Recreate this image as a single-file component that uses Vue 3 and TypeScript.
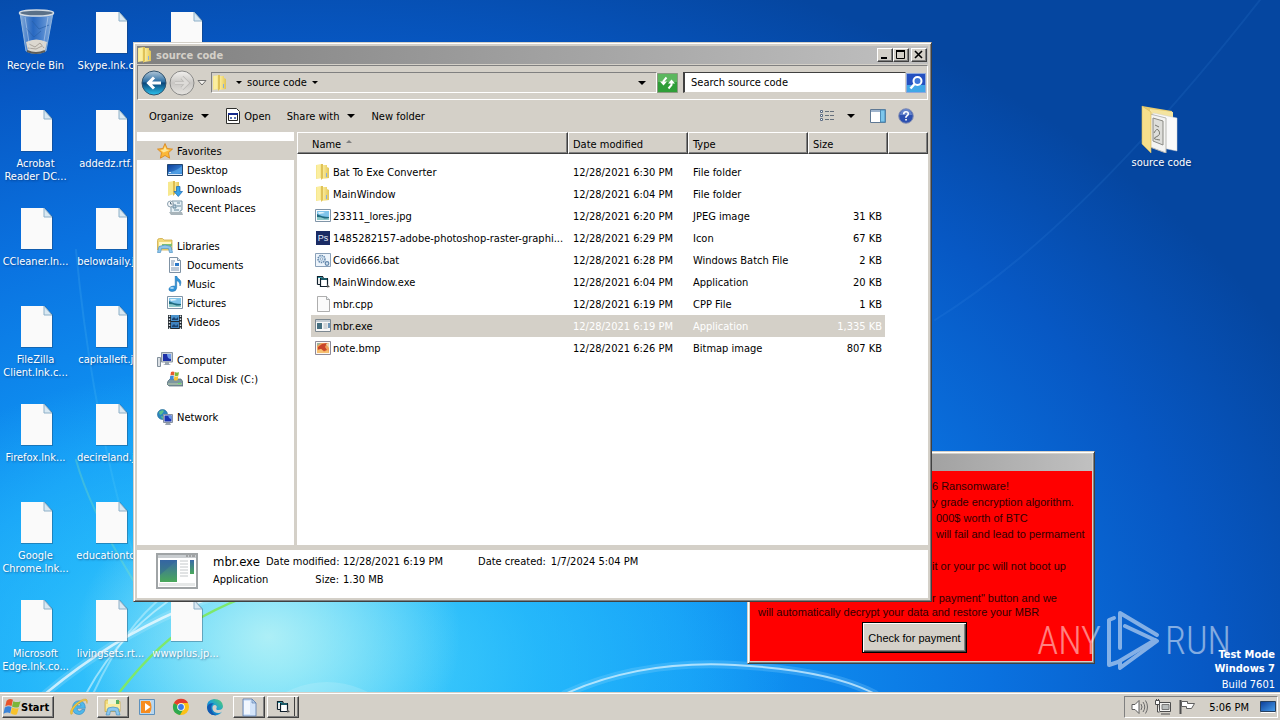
<script setup lang="ts">
import { ref } from 'vue'

interface DesktopItem { icon: string; lines: string[] }
interface NavItem { icon: string; label: string }
interface NavGroup { icon: string; label: string; active?: boolean; children: NavItem[] }
interface FileRow { icon: string; name: string; date: string; type: string; size: string }

const desktopColumns: (DesktopItem | null)[][] = [
  [
    { icon: 'recycle', lines: ['Recycle Bin'] },
    { icon: 'page', lines: ['Acrobat', 'Reader DC...'] },
    { icon: 'page', lines: ['CCleaner.ln...'] },
    { icon: 'page', lines: ['FileZilla', 'Client.lnk.c...'] },
    { icon: 'page', lines: ['Firefox.lnk...'] },
    { icon: 'page', lines: ['Google', 'Chrome.lnk...'] },
    { icon: 'page', lines: ['Microsoft', 'Edge.lnk.co...'] },
  ],
  [
    { icon: 'page', lines: ['Skype.lnk.c...'] },
    { icon: 'page', lines: ['addedz.rtf....'] },
    { icon: 'page', lines: ['belowdaily.j...'] },
    { icon: 'page', lines: ['capitalleft.j...'] },
    { icon: 'page', lines: ['decireland.j...'] },
    { icon: 'page', lines: ['educationto...'] },
    { icon: 'page', lines: ['livingsets.rt...'] },
  ],
  [
    { icon: 'page', lines: [] },
    null, null, null, null, null,
    { icon: 'page', lines: ['wwwplus.jp...'] },
  ],
]

const nav: NavGroup[] = [
  {
    icon: 'star', label: 'Favorites', active: true, children: [
      { icon: 'desktop', label: 'Desktop' },
      { icon: 'downloads', label: 'Downloads' },
      { icon: 'recent', label: 'Recent Places' },
    ],
  },
  {
    icon: 'libraries', label: 'Libraries', children: [
      { icon: 'document', label: 'Documents' },
      { icon: 'music', label: 'Music' },
      { icon: 'picture', label: 'Pictures' },
      { icon: 'video', label: 'Videos' },
    ],
  },
  { icon: 'computer', label: 'Computer', children: [{ icon: 'disk', label: 'Local Disk (C:)' }] },
  { icon: 'network', label: 'Network', children: [] },
]

const files: FileRow[] = [
  { icon: 'folder', name: 'Bat To Exe Converter', date: '12/28/2021 6:30 PM', type: 'File folder', size: '' },
  { icon: 'folder', name: 'MainWindow', date: '12/28/2021 6:04 PM', type: 'File folder', size: '' },
  { icon: 'picture', name: '23311_lores.jpg', date: '12/28/2021 6:20 PM', type: 'JPEG image', size: '31 KB' },
  { icon: 'ps', name: '1485282157-adobe-photoshop-raster-graphi...', date: '12/28/2021 6:29 PM', type: 'Icon', size: '67 KB' },
  { icon: 'batch', name: 'Covid666.bat', date: '12/28/2021 6:28 PM', type: 'Windows Batch File', size: '2 KB' },
  { icon: 'vb', name: 'MainWindow.exe', date: '12/28/2021 6:04 PM', type: 'Application', size: '20 KB' },
  { icon: 'blank', name: 'mbr.cpp', date: '12/28/2021 6:19 PM', type: 'CPP File', size: '1 KB' },
  { icon: 'exe', name: 'mbr.exe', date: '12/28/2021 6:19 PM', type: 'Application', size: '1,335 KB' },
  { icon: 'bitmap', name: 'note.bmp', date: '12/28/2021 6:26 PM', type: 'Bitmap image', size: '807 KB' },
]

const selected = ref('mbr.exe')
const search = ref('')
</script>

<template>
  <svg class="sprites" aria-hidden="true">
    <defs>
      <linearGradient id="g-folder" x1="0" x2="1"><stop offset="0" stop-color="#fbf0a8" /><stop offset=".5" stop-color="#f2dc7c" /><stop offset="1" stop-color="#e0c458" /></linearGradient>
      <linearGradient id="g-glass" x1="0" x2="1"><stop offset="0" stop-color="#b8d0e8" stop-opacity=".75" /><stop offset=".4" stop-color="#4a80cc" stop-opacity=".5" /><stop offset="1" stop-color="#a8c8ec" stop-opacity=".8" /></linearGradient>
      <linearGradient id="g-back" x1="0" y1="0" x2="0" y2="1"><stop offset="0" stop-color="#b4c8d8" /><stop offset=".45" stop-color="#2a6ea4" /><stop offset=".5" stop-color="#0a4578" /><stop offset="1" stop-color="#2cc4f0" /></linearGradient>
      <linearGradient id="g-fwd" x1="0" y1="0" x2="0" y2="1"><stop offset="0" stop-color="#f2f0ee" /><stop offset=".5" stop-color="#c9c7c4" /><stop offset="1" stop-color="#e6e4e0" /></linearGradient>
      <linearGradient id="g-screen" x1="0" y1="0" x2="1" y2="1"><stop offset="0" stop-color="#0a3c98" /><stop offset="1" stop-color="#4aa0ec" /></linearGradient>
      <linearGradient id="g-exe" x1="0" y1="0" x2="0" y2="1"><stop offset="0" stop-color="#3a6aa8" /><stop offset="1" stop-color="#4aa85a" /></linearGradient>
      <linearGradient id="g-edge" x1="0" y1="1" x2="1" y2="0"><stop offset="0" stop-color="#0c58b0" /><stop offset=".5" stop-color="#1aa0d8" /><stop offset="1" stop-color="#58d068" /></linearGradient>
    </defs>

    <symbol id="i-page" viewBox="0 0 48 48">
      <path d="M9 4h24l8 9v33H9z" fill="#1c3550" opacity=".35" />
      <path d="M9 4h23l8 9v32H9z" fill="#fafafa" />
      <path d="M32 4v9h8z" fill="#d9e8f2" stroke="#8eb0c8" />
    </symbol>
    <symbol id="i-recycle" viewBox="0 0 48 48">
      <path d="M8 5l6 38q10 5 20 0l7-38z" fill="url(#g-glass)" stroke="#8fb4dc" />
      <path d="M14 34q10-5 21 0l-2 9q-9 4-17 0z" fill="#dcd8d0" />
      <path d="M17 36l6 3 5-4 4 5M16 40l8 1 6-3" stroke="#aaa49c" fill="none" />
      <path d="M20 13l7 8 10-4M14 20l8 9 7-6" stroke="#2860a8" fill="none" opacity=".7" />
      <path d="M13 9l5 32M36 9l-5 30" stroke="#cfe0f4" opacity=".5" />
      <ellipse cx="24.500" cy="5" rx="17" ry="3" fill="#5a7088" stroke="#d4dce4" stroke-width="1.500" />
      <path d="M15 43q9 4 18 0" stroke="#5c5c58" fill="none" stroke-width="2" />
    </symbol>
    <symbol id="i-openfolder" viewBox="3 0 48 48">
      <path d="M7 1l30 5v38l-30-6z" fill="#e8cc70" />
      <path d="M15 4l23 3v35H15z" fill="#f4e4a0" />
      <path d="M18 8l24 5v33l-24-5z" fill="#fafafa" stroke="#d0d0d0" stroke-width=".5" />
      <path d="M15 9l16 4v35l-16-6z" fill="#f4f4f2" stroke="#b8b8b4" />
      <path d="M18 13l10 3v24l-10-4z" fill="#dededa" stroke="#8a8a84" />
      <path d="M19 28q3-6 5-2t-3 6 4 3M20 20l4 2" stroke="#77776f" fill="none" />
      <path d="M7 1l9 6v41L7 39z" fill="#f6df8c" stroke="#d8b858" stroke-width=".6" />
    </symbol>
    <symbol id="i-folder" viewBox="0 0 16 16">
      <path d="M1 1l6-1v14l-6 1z" fill="#f7e88e" /><path d="M7 1h5v2l2 1v10l-7 1z" fill="url(#g-folder)" />
      <path d="M6 0h2v14l-2 2z" fill="#dfc258" /><path d="M2 1h3v13H2z" fill="#fbeea0" /><path d="M11 9h1v4h-1z" fill="#88aede" />
    </symbol>
    <symbol id="i-star" viewBox="0 0 16 16"><path d="M8 .5l2.200 5 5.300.6-4 3.600 1.100 5.500L8 12.500l-4.600 2.700 1.100-5.500-4-3.600 5.300-.6z" fill="#fbb838" stroke="#d98318" stroke-width=".8" /><path d="M8 3l1.400 3.500 3.200.5-6 2.500-3-2.500 3-.5z" fill="#fee698" /></symbol>
    <symbol id="i-desktop" viewBox="0 0 16 16"><path d="M.5 2.500h15v11H.5z" fill="url(#g-screen)" stroke="#23466e" /><path d="M1 10q7 0 14-6v6q-6 3-14 2z" fill="#5fb0ef" opacity=".6" /><path d="M1 12h14v1H1zM2 10h2v1H2z" fill="#d8e8f8" /></symbol>
    <symbol id="i-downloads" viewBox="0 0 16 16"><path d="M1 1l6-1v13l-6 2z" fill="#f7e88e" /><path d="M7 1h5v12H7z" fill="url(#g-folder)" /><path d="M6 0h2v13l-2 2z" fill="#ddbd50" /><path d="M9.500 5.500h3.500v5h2.500L11.300 15.500 7 10.500h2.500z" fill="#38a2ea" stroke="#1768b2" stroke-width=".7" /></symbol>
    <symbol id="i-recent" viewBox="0 0 16 16"><path d="M5 1h10v9l-2 1v3H4V6z" fill="#e6f0f5" stroke="#7d99a9" /><path d="M6 5h3v3H6zM10 3h3M10 6h4M7 10h5" fill="#bcd0de" stroke="#65889c" /><circle cx="3.500" cy="4" r="3" fill="#f3f6f8" stroke="#8ba0ae" /><path d="M3.500 2v2h2" stroke="#577080" fill="none" /><path d="M2 12h13l1 3H4z" fill="#a8b4ba" /></symbol>
    <symbol id="i-libraries" viewBox="0 0 16 16"><path d="M.5 2.500q0-2 2-2h3l1.500 1.500h8v10H.5z" fill="#f1d978" stroke="#ceab49" stroke-width=".8" /><path d="M2 4h12v4H2z" fill="#fff7c6" /><path d="M5 6h9l1-1v3H5z" fill="#7fc06c" /><path d="M2 8.500q6-3 12 0l1.500 6h-3l-1-4h-7l-1 4H.5z" fill="#8ec5ec" stroke="#4c93c6" stroke-width=".7" /></symbol>
    <symbol id="i-document" viewBox="0 0 16 16"><path d="M2.500.5h8l3 3v12h-11z" fill="#fbfcfd" stroke="#7f92a4" /><path d="M4 4h4M4 6h3M4 8h3M4 11h8M4 13h8" stroke="#7d94b0" /><path d="M8 6h4v3H8z" fill="#2c78c8" /><path d="M10.500.5v3h3" fill="#d7e4ee" stroke="#7f92a4" /></symbol>
    <symbol id="i-music" viewBox="0 0 16 16"><path d="M8.200 0h1.400q.5 2 3 3.600 2.400 2 .4 6.400.3-4-3.300-5.600V12q-.5 3.500-4.500 3.600Q1.500 15.300 2 12.700q1-2.700 4.600-2.700l1.600.2z" fill="#2f93d9" stroke="#1b6cab" stroke-width=".5" /><ellipse cx="5" cy="12" rx="2" ry="1" fill="#a6d6f7" /></symbol>
    <symbol id="i-picture" viewBox="0 0 16 16"><path d="M.5 1.500h15v12H.5z" fill="#fcfdfe" stroke="#8095a8" /><path d="M2 3h12v9H2z" fill="#7fc4ea" /><path d="M2 6q5 3 12 3v3H2z" fill="#1f6b80" /><path d="M2 9q4 0 6 1t6 0v2H2z" fill="#8cc8c8" /><path d="M3 4h5l2 1-6 1z" fill="#dff2fb" /></symbol>
    <symbol id="i-video" viewBox="0 0 16 16"><path d="M1 1h14v14H1z" fill="#232a30" /><path d="M4 1h8v6H4z" fill="#4b93cc" /><path d="M4 8h8v6H4z" fill="#3f83bf" /><path d="M2.500 1.500v14M13.500 1.500v14" stroke="#dfe5ea" stroke-width="1.400" stroke-dasharray="1.500 1.500" /><path d="M5 5q2-3 3-1t3-1v3H5zM5 12q2-3 3-1t3-1v3H5z" fill="#1b4572" /></symbol>
    <symbol id="i-computer" viewBox="0 0 16 16"><path d="M.5 5.500h3v9h-3z" fill="#dadfe4" stroke="#83909c" /><path d="M4.500.5h11v9.500h-11z" fill="#c8d0d8" stroke="#8b96a1" /><path d="M6 2h8v7H6z" fill="#1d30a8" /><path d="M10 2h4v5q-4 0-4-5z" fill="#6f9bea" /><path d="M8 10h4v2l2 1H6l2-1z" fill="#9aa5b0" /></symbol>
    <symbol id="i-disk" viewBox="0 0 16 16"><path d="M1 10l2-2h11l2 3v4H2l-2-2z" fill="#7d97a0" stroke="#4d666f" stroke-width=".7" /><path d="M1 12h14v2H1z" fill="#9fb4a7" /><path d="M11 12h3v1h-3z" fill="#65e864" /><path d="M4 1q2-1 3.500 0L7 4.500q-2-1-3.600 0z" fill="#e8592c" /><path d="M8 1q2 1 4 0l-.6 3.500q-2 1-3.900 0z" fill="#7fb83a" /><path d="M3.200 5q2-1 3.600 0L6.300 9q-2-1-3.600 0z" fill="#3d8ad8" /><path d="M7.400 5q2 1 3.900 0l-.6 4q-2 1-3.800 0z" fill="#f6c330" /></symbol>
    <symbol id="i-network" viewBox="0 0 16 16"><circle cx="5.500" cy="5.500" r="5" fill="#2c86c0" stroke="#19658f" stroke-width=".6" /><path d="M2 3q3-3 5-1L5 5 3 6zM4 7l3 1-2 2z" fill="#5cc08a" /><path d="M6.500 5.500h9v8h-9z" fill="#dbe1e6" stroke="#8893a0" /><path d="M7.500 6.500h7v6h-7z" fill="#1a35b4" /><path d="M11 6.500h3.500v4q-3-1-3.500-4z" fill="#6896ea" /><path d="M9 14h4l1 2H8z" fill="#9aa5b0" /></symbol>
    <symbol id="i-batch" viewBox="0 0 16 16"><path d="M.5 1.500h15v13H.5z" fill="#edf4fb" stroke="#8aa0b8" /><circle cx="6.500" cy="7" r="3.500" fill="#d2e2f0" stroke="#6488ac" stroke-width="1.500" stroke-dasharray="1.500 .8" /><circle cx="6.500" cy="7" r="1.200" fill="#fff" stroke="#6488ac" stroke-width=".6" /><circle cx="12" cy="11.500" r="1.800" fill="#d2e2f0" stroke="#6488ac" stroke-width="1.200" /></symbol>
    <symbol id="i-vb" viewBox="0 0 16 16"><path d="M2 3h5v1h6v9H6v-3H2z" fill="#fff" /><path d="M2.500 10.500V2.500h5l1 2M2.500 10.500h3M5.500 5v7.500h7V5" fill="none" stroke="#10202c" stroke-width="1.200" /><path d="M5 5h8" stroke="#10202c" stroke-width="2" /><path d="M6 5h6M3 3.500h4" stroke="#2898a8" /><path d="M12 10l3 3-3 .5z" fill="#555" /></symbol>
    <symbol id="i-blank" viewBox="0 0 16 16"><path d="M2.500.5h9l3 3v12h-12z" fill="#fbfbfb" stroke="#999" stroke-width=".8" /><path d="M11.500.5v3h3" fill="#e8eef2" stroke="#999" stroke-width=".8" /></symbol>
    <symbol id="i-exe" viewBox="0 0 16 16"><path d="M.5 1.500h15v12H.5z" fill="#f8f8f8" stroke="#7d8890" /><path d="M1 2h14v2H1z" fill="#c3ccd3" /><path d="M2 5h5v6H2z" fill="#456f80" /><path d="M8.500 6h4M8.500 8h4M8.500 10h4" stroke="#a9b0b6" /><path d="M13 5h2v5h-2z" fill="#6f96b8" /></symbol>
    <symbol id="i-bitmap" viewBox="0 0 16 16"><path d="M.5 1.500h15v13H.5z" fill="#fdf7f2" stroke="#8e8a98" /><path d="M2 3h12v10H2z" fill="#f0a058" /><path d="M3 7l4-3 5-1-2 4 2 3-3 1-3-2-3 2z" fill="#c8442a" /><path d="M2 10l4-1 3 3 4-2 1 3H2z" fill="#f6c070" /><path d="M11 4l3-1v5z" fill="#e8d8b0" /><path d="M2 3h4L2 6z" fill="#98b4a0" /></symbol>
    <symbol id="i-open" viewBox="0 0 16 16"><path d="M1.500.5h10l3 3v12h-13z" fill="#fff" stroke="#30302e" /><path d="M3.500 5.500h9v7h-9z" fill="#fff" stroke="#222" /><path d="M3 5h10v2H3z" fill="#162a8c" /><path d="M5 10h2M9 10h2M6 9v2M10 9v2" stroke="#2a489c" /></symbol>
    <symbol id="i-ie" viewBox="0 0 20 20"><path d="M16 12.500q-1.600 5-6.200 5Q3.600 17 3.600 10.500 4 4 10 3.800q6.400.5 6.300 7.500H8q.2 3 2.500 3 1.700 0 2.300-1.800zM8 8.800h4q-.1-2.300-2-2.400Q8.200 6.500 8 8.800z" fill="#4fb8ea" stroke="#2a86c4" stroke-width=".6" /><path d="M2 17.500Q0 14 5 8.500 12 1.500 17 2q2 .5 1 4.500 0-3-2-3-4 .5-9 5.500-4.500 5-3.500 7.500z" fill="#f2c53c" stroke="#c89a20" stroke-width=".4" /></symbol>
    <symbol id="i-explorer" viewBox="0 0 20 20"><path d="M2 4.500q0-1.500 1.500-1.500H7l1.500 1.500h8.500v10H2z" fill="#f2dc7c" stroke="#caa94a" stroke-width=".8" /><path d="M5 2h9v5H5z" fill="#eef4d4" /><path d="M13 3h3v4h-3z" fill="#58b060" /><path d="M3 7h14v5H3z" fill="#fbec9e" /><path d="M5 11q5-2 10 0l2 7h-3.500l-1-4h-5l-1 4H3z" fill="#8cc8ee" stroke="#4a94c6" stroke-width=".7" /></symbol>
    <symbol id="i-wmp" viewBox="0 0 20 20"><path d="M2.500 2.500h15v15h-15z" fill="#b8d6ee" stroke="#5d91bd" /><path d="M4 4h10v12H4z" fill="#f6f0e8" /><path d="M4 4h9q3 6 0 12H4z" fill="#f68c1f" /><path d="M8 6l5.500 4L8 14z" fill="#fff" /></symbol>
    <symbol id="i-chrome" viewBox="0 0 20 20"><circle cx="10" cy="10" r="8" fill="#fbc116" /><path d="M10 10L3 6a8 8 0 006 12l4-7z" fill="#2da94f" /><path d="M3 6a8 8 0 0114 0h-7a4 4 0 00-3.500 2z" fill="#e33b2e" /><circle cx="10" cy="10" r="3.800" fill="#fff" /><circle cx="10" cy="10" r="2.900" fill="#3c7be8" /></symbol>
    <symbol id="i-edge" viewBox="0 0 20 20"><path d="M2 11Q1 3 9 2q8 0 9 7 0 4-4.500 4-3 0-2-2 1-2-1.500-3-3 0-2.500 4 1 4 6 4 2 0 3.500-1.500Q14.500 18.500 10 18.300 3 18 2 11z" fill="url(#g-edge)" /><path d="M2 10q2-5 7-3.500Q5 8 6.500 13q1.200 4.500 5 5.200Q3 19 2 10z" fill="#1359b0" /></symbol>
    <symbol id="i-note" viewBox="0 0 20 20"><path d="M4 2h9l4 4v13H4z" fill="#d3e4fa" stroke="#5577a8" stroke-width=".8" /><path d="M5 4h6v13H5z" fill="#fff" opacity=".7" /><path d="M13 2v4h4z" fill="#b4cdec" stroke="#5577a8" stroke-width=".6" /></symbol>
    <symbol id="i-flag" viewBox="0 0 20 20"><path d="M4 3q3-3 7-1L9.500 9Q6 7 2.500 9.500z" fill="#e8532a" /><path d="M11.500 3.500q4 2 8 0L17.500 10q-4 1.500-7.500-.5z" fill="#7cb63a" /><path d="M2 10.500q4-2.500 7.500-.5L8 17q-3-2-7.500.5z" fill="#3a84d8" /><path d="M10 10.500q4 2 7.500.5L15.500 18q-4 1.500-7-1z" fill="#f7c22c" /></symbol>
  </svg>

  <div class="screen">
    <main class="desktop">
      <svg class="wallpaper" viewBox="0 0 1280 692" preserveAspectRatio="none" aria-hidden="true">
        <g fill="none" stroke-linecap="round">
          <path d="M45 694Q110 640 180 610T300 580" stroke="#fff" stroke-width="8" opacity=".15" />
          <path d="M45 694Q110 640 180 610T300 580" stroke="#fff" stroke-width="2.500" opacity=".7" />
          <path d="M86 694Q120 630 185 590" stroke="#e8fcff" stroke-width="2" opacity=".55" />
          <path d="M93 694Q125 625 165 595" stroke="#e8fcff" stroke-width="2" opacity=".4" />
          <path d="M118 694Q160 640 200 618T270 590" stroke="#7ee86a" stroke-width="2.500" />
          <path d="M76 250Q92 420 135 560" stroke="#8be8f8" opacity=".12" stroke-width="2" />
          <path d="M76 460Q90 510 133 580" stroke="#9ff0a0" opacity=".25" stroke-width="2" />
          <path d="M565 694Q640 660 735 665T875 694" stroke="#8fd8ff" stroke-width="8" opacity=".25" />
          <path d="M565 694Q640 660 735 665T875 694" stroke="#d6f2ff" stroke-width="2" opacity=".75" />
          <path d="M935 320Q1080 230 1260 0" stroke="#4a9cf0" opacity=".12" stroke-width="2" />
        </g>
        <circle cx="327" cy="770" r="88" fill="#fff" opacity=".14" />
      </svg>

      <div class="icons">
        <ul v-for="(col, c) in desktopColumns" :key="c" class="icon-col">
          <li v-for="(item, r) in col" :key="r" class="icon-cell">
            <template v-if="item">
              <svg class="big"><use :href="'#i-' + item.icon" /></svg>
              <span v-for="line in item.lines" :key="line" class="icon-label">{{ line }}</span>
            </template>
          </li>
        </ul>
      </div>

      <div class="shortcut icon-cell">
        <svg class="big"><use href="#i-openfolder" /></svg>
        <span class="icon-label">source code</span>
      </div>

      <section class="frame ransom" aria-label="Message">
        <div class="titlebar"></div>
        <div class="ransom-body">
          <div class="notes">
            <p>6 Ransomware!</p>
            <p>y grade encryption algorithm.</p>
            <p class="inset">000$ worth of BTC</p>
            <p class="inset">will fail and lead to permament</p>
            <p class="gap">it or your pc will not boot up</p>
            <p class="gap">r payment" button and we</p>
          </div>
          <p class="last">will automatically decrypt your data and restore your MBR</p>
          <button class="pay" type="button">Check for payment</button>
        </div>
      </section>

      <section class="frame explorer" aria-label="source code">
        <header class="titlebar">
          <svg class="s16"><use href="#i-folder" /></svg>
          <span class="title">source code</span>
          <div class="winbtns">
            <button type="button" aria-label="Minimize"><svg viewBox="0 0 12 10"><path d="M2 8h6" stroke="#000" stroke-width="2" /></svg></button>
            <button type="button" aria-label="Maximize"><svg viewBox="0 0 12 10"><path d="M1.500 1v7.500h8V1M1 1h9" stroke="#000" fill="none" /><path d="M1 1h9" stroke="#000" stroke-width="2" /></svg></button>
            <button type="button" class="close" aria-label="Close"><svg viewBox="0 0 12 10"><path d="M2 1l7 7M9 1L2 8" stroke="#000" stroke-width="1.600" /></svg></button>
          </div>
        </header>

        <div class="addressbar">
          <button class="plain" type="button" aria-label="Back">
            <svg class="s26" viewBox="0 0 26 26"><circle cx="13" cy="13" r="12" fill="url(#g-back)" stroke="#33536c" /><path d="M20 13H8M13 7.500L7.500 13l5.500 5.500" stroke="#fff" stroke-width="3" fill="none" /></svg>
          </button>
          <button class="plain" type="button" aria-label="Forward">
            <svg class="s26" viewBox="0 0 26 26"><circle cx="13" cy="13" r="12" fill="url(#g-fwd)" stroke="#8a8a88" /><path d="M6 13h12M13 7.500l5.500 5.500-5.500 5.500" stroke="#b9b7b4" stroke-width="4" fill="none" /><path d="M6 13h12M13 7.500l5.500 5.500-5.500 5.500" stroke="#dddbd8" stroke-width="2.500" fill="none" /></svg>
          </button>
          <button class="plain history" type="button" aria-label="Recent pages">
            <svg viewBox="0 0 10 8"><path d="M1 1.500h8L5 6z" fill="#f4f2ee" stroke="#707070" /></svg>
          </button>
          <div class="path">
            <svg class="s16"><use href="#i-folder" /></svg>
            <i class="tri small"></i>
            <span>source code</span>
            <i class="tri small"></i>
            <i class="tri drop"></i>
          </div>
          <button class="plain refresh" type="button" aria-label="Refresh">
            <svg viewBox="0 0 21 20"><path d="M.5.500h20v19H.5z" fill="#2f9e38" stroke="#8a9a80" /><path d="M1 1h19v8H1z" fill="#7cc878" opacity=".6" /><path d="M9.500 4.500L6.500 8v3" stroke="#fff" fill="none" stroke-width="2" /><path d="M3 8.500h7l-3.500 4z" fill="#fff" /><path d="M14.500 9v3l-3 3.500" stroke="#fff" fill="none" stroke-width="2" /><path d="M11 10.500h7l-3.500-4z" fill="#fff" /></svg>
          </button>
          <input v-model="search" class="search" type="text" placeholder="Search source code" aria-label="Search source code" />
          <button class="plain find" type="button" aria-label="Search">
            <svg viewBox="0 0 20 20"><path d="M.5.500h19v19H.5z" fill="#2450c0" stroke="#8ea8dc" /><path d="M1 12h18v7H1z" fill="#49c4f4" opacity=".75" /><circle cx="11.500" cy="8" r="4" fill="#3f77d8" stroke="#fff" stroke-width="2" /><path d="M8.500 11L4.500 15.500" stroke="#fff" stroke-width="2.500" /></svg>
          </button>
        </div>

        <div class="toolbar">
          <button class="plain" type="button">Organize <i class="tri"></i></button>
          <button class="plain" type="button"><svg class="s16"><use href="#i-open" /></svg> Open</button>
          <button class="plain" type="button">Share with <i class="tri"></i></button>
          <button class="plain" type="button">New folder</button>
          <div class="tools">
            <button class="plain view" type="button" aria-label="Change your view">
              <svg class="s16" viewBox="0 0 16 16"><path d="M1.500 2.500h2v2h-2zM1.500 6.500h2v2h-2zM1.500 10.500h2v2h-2z" fill="#fff" stroke="#5c6c84" /><path d="M6 3.500h4M11 3.500h4M6 7.500h4M11 7.500h4M6 11.500h4M11 11.500h4" stroke="#66707c" /></svg>
              <i class="tri"></i>
            </button>
            <button class="plain" type="button" aria-label="Preview pane">
              <svg class="s16" viewBox="0 0 16 16"><path d="M.5 1.500h15v13H.5z" fill="#fff" stroke="#5e7894" /><path d="M1 2h9v2H1z" fill="#9fb4cc" /><path d="M10.500 2h4.500v12h-4.500z" fill="#7cc6ec" stroke="#4a8cb8" /></svg>
            </button>
            <button class="plain" type="button" aria-label="Help">
              <svg class="s16" viewBox="0 0 16 16"><circle cx="8" cy="8" r="7.300" fill="#2c50b0" stroke="#8892b4" /><path d="M2 7a6 6 0 0112 0z" fill="#88a4dc" opacity=".6" /><path d="M5.700 6.200Q5.800 3.800 8 3.800t2.300 2q0 1.200-1.300 1.900T8 9.800" stroke="#fff" stroke-width="1.600" fill="none" /><path d="M7.200 11h1.700v1.600H7.200z" fill="#fff" /></svg>
            </button>
          </div>
        </div>

        <div class="content">
          <nav class="navpane">
            <ul v-for="group in nav" :key="group.label">
              <li class="nav-head" :class="{ active: group.active }"><svg class="s16"><use :href="'#i-' + group.icon" /></svg>{{ group.label }}</li>
              <li v-for="child in group.children" :key="child.label" class="nav-child"><svg class="s16"><use :href="'#i-' + child.icon" /></svg>{{ child.label }}</li>
            </ul>
          </nav>
          <div class="listing">
            <table>
              <colgroup><col class="c-name" /><col class="c-mid" /><col class="c-mid" /><col class="c-size" /><col /></colgroup>
              <thead>
                <tr><th class="first">Name <i class="sort"></i></th><th>Date modified</th><th>Type</th><th>Size</th><th></th></tr>
              </thead>
              <tbody>
                <tr v-for="file in files" :key="file.name" :class="{ selected: file.name === selected }" @click="selected = file.name">
                  <td>
                    <div class="cell name">
                      <span v-if="file.icon === 'ps'" class="ps">Ps</span>
                      <svg v-else class="s16"><use :href="'#i-' + file.icon" /></svg>
                      {{ file.name }}
                    </div>
                  </td>
                  <td><div class="cell">{{ file.date }}</div></td>
                  <td><div class="cell">{{ file.type }}</div></td>
                  <td><div class="cell size">{{ file.size }}</div></td>
                  <td></td>
                </tr>
              </tbody>
            </table>
          </div>
        </div>

        <footer class="details">
          <svg class="thumb" viewBox="0 0 42 36"><path d="M1 1h40v34H1z" fill="#fff" stroke="#a0a4a6" stroke-width="2" /><path d="M2 2h38v3H2z" fill="#c9cdd0" /><path d="M30 3h2M33 3h2M36 3h3" stroke="#777" /><path d="M4 7h17v22H4z" fill="url(#g-exe)" /><path d="M4 7h17L4 22z" fill="#2c5e9c" opacity=".4" /><path d="M24 8h8M24 11h8M24 14h8M24 17h8M24 20h8M24 23h8" stroke="#c4c8ca" /><path d="M34 7h4v14h-4z" fill="url(#g-exe)" /><path d="M3 30h36v3H3z" fill="#e6e8e8" /></svg>
          <div class="d-main"><strong>mbr.exe</strong><span>Application</span></div>
          <dl class="d-mid">
            <dt>Date modified:</dt><dd>12/28/2021 6:19 PM</dd>
            <dt>Size:</dt><dd>1.30 MB</dd>
          </dl>
          <dl class="d-end"><dt>Date created:</dt><dd>1/7/2024 5:04 PM</dd></dl>
        </footer>
      </section>

      <div class="brand">
        <span>ANY</span>
        <svg viewBox="0 0 56 62"><g fill="none" stroke="#fff" stroke-width="4" stroke-linejoin="round" stroke-linecap="round"><path d="M9 8L4 10v45l9-3 37-22" /><path d="M15 38V3l37 22" /><path d="M20 16l32 15-37 27v-6" /></g></svg>
        <span>RUN</span>
      </div>

      <div class="build"><b>Test Mode</b><b>Windows 7</b><span>Build 7601</span></div>
    </main>

    <footer class="taskbar">
      <button class="start" type="button"><svg class="s18"><use href="#i-flag" /></svg>Start</button>
      <button class="task" type="button" aria-label="Internet Explorer"><svg class="s20"><use href="#i-ie" /></svg></button>
      <button class="task raised" type="button" aria-label="Windows Explorer"><svg class="s20"><use href="#i-explorer" /></svg></button>
      <button class="task" type="button" aria-label="Media Player"><svg class="s20"><use href="#i-wmp" /></svg></button>
      <button class="task" type="button" aria-label="Chrome"><svg class="s20"><use href="#i-chrome" /></svg></button>
      <button class="task" type="button" aria-label="Edge"><svg class="s20"><use href="#i-edge" /></svg></button>
      <button class="task raised" type="button" aria-label="Document"><svg class="s20"><use href="#i-note" /></svg></button>
      <button class="task raised stacked" type="button" aria-label="MainWindow"><svg class="s16"><use href="#i-vb" /></svg></button>
      <div class="tray">
        <svg class="s18" viewBox="0 0 18 18"><path d="M2 6.500h3l4-4v13l-4-4H2z" fill="#fff" stroke="#5c5c5c" /><path d="M11 6q2 3 0 6M13 4q3.500 5 0 10M15.500 2.500q4 6.500 0 13" stroke="#6a6a6a" fill="none" /></svg>
        <svg class="s18" viewBox="0 0 18 18"><path d="M5.500 4.500h11v9h-11zM7 16h9" fill="#f4f4f2" stroke="#4c4c4c" /><path d="M8 6.500h7v5H8z" fill="#b8bcbc" stroke="#777" /><path d="M1.500 2.500h4v4h-4zM2.500 1v2M4.500 1v2M3.500 6v8h2" fill="#fff" stroke="#4c4c4c" /></svg>
        <svg class="s18" viewBox="0 0 18 18"><path d="M2.500 2v14" stroke="#4f4f4f" stroke-width="2" /><path d="M3.500 3.500h6v2h7l-3 5h-5v-2h-5z" fill="#fff" stroke="#5f5f5f" /></svg>
        <time>5:06 PM</time>
        <svg class="s16" viewBox="0 0 16 16"><path d="M.5 2.500h15v10H.5z" fill="url(#g-screen)" stroke="#27405e" /><path d="M1 13h14v1H1z" fill="#fff" /></svg>
      </div>
    </footer>
  </div>
</template>

<style>
body { margin: 0; overflow: hidden; }
</style>

<style scoped>
.screen { display: flex; flex-direction: column; min-height: 100vh; font: 11px/13px "DejaVu Sans Condensed", "Noto Sans", sans-serif; color: #000; cursor: default; }
.screen *, .sprites { box-sizing: border-box; }
.sprites { position: absolute; width: 0; height: 0; }
ul, dl, dd, p { margin: 0; padding: 0; list-style: none; }
button { font: inherit; color: inherit; padding: 0; }
svg { display: block; flex: none; }
.s16 { width: 16px; height: 16px; }
.s18 { width: 18px; height: 18px; }
.s20 { width: 20px; height: 20px; }
.s26 { width: 26px; height: 26px; }
.plain { display: flex; align-items: center; background: none; border: 0; }

.desktop {
  position: relative; flex: 1; overflow: hidden;
  background:
    radial-gradient(ellipse 15% 22% at 21% 92%, rgba(190, 244, 246, .85), rgba(170, 240, 250, 0) 100%),
    radial-gradient(ellipse 40% 44% at 22% 96%, rgba(90, 220, 250, .9), rgba(50, 200, 252, .6) 50%, rgba(40, 180, 250, 0) 100%),
    radial-gradient(ellipse 86% 112% at 24% 100%, #14acfc 0%, #1098f6 35%, #0a72e0 62%, #0758c4 82%, #0546a0 100%);
}
.wallpaper { position: absolute; inset: 0; width: 100%; height: 100%; }

.icons { position: absolute; top: 8px; left: -2px; display: flex; }
.icon-col { width: 75px; }
.icon-cell { display: flex; flex-direction: column; align-items: center; width: 75px; height: 98px; white-space: nowrap; color: #fff; }
.big { width: 48px; height: 48px; margin-bottom: 3px; }
.icon-label { text-shadow: 1px 1px 2px rgba(0, 30, 80, .5); }
.shortcut { position: absolute; top: 105px; right: 81px; }

.frame { position: absolute; display: flex; flex-direction: column; padding: 2px; background: #d4d0c8; border: 1px solid; border-color: #d4d0c8 #404040 #404040 #d4d0c8; box-shadow: inset 1px 1px #fff, inset -1px -1px #808080; }
.titlebar { display: flex; align-items: center; flex: none; height: 18px; background: linear-gradient(90deg, #808080, #c0c0c0); }

.ransom { right: 185px; bottom: 28px; width: 348px; }
.ransom .titlebar { height: 17px; }
.ransom-body { display: flex; flex-direction: column; height: 190px; padding: 7px 8px 8px; background: #f00; color: #300000; font-family: "Liberation Sans", sans-serif; line-height: 16px; }
.ransom-body p { white-space: nowrap; }
.notes { margin-left: 174px; }
.inset { padding-left: 4px; }
.gap { margin-top: 16px; }
.ransom-body .last { line-height: 12px; }
.pay { width: 105px; height: 33px; margin: 4px 0 0 104px; background: #d4d0c8; color: #000; border: 1px solid #000; box-shadow: inset 1px 1px #fff, inset -1px -1px #404040, inset -2px -2px #808080; }

.explorer { inset: 42px 348px 90px 133px; padding: 3px; }
.title { margin-left: 3px; font-weight: bold; color: #d4d0c8; }
.winbtns { display: flex; margin-left: auto; padding-right: 1px; }
.winbtns button { width: 16px; height: 14px; background: #d4d0c8; border: 1px solid; border-color: #fff #404040 #404040 #fff; box-shadow: inset -1px -1px #808080; }
.winbtns svg { width: 12px; height: 10px; margin: 1px; }
.winbtns .close { margin-left: 2px; }

.addressbar { display: flex; align-items: center; flex: none; height: 35px; margin-top: 1px; padding: 0 1px 0 3px; border: 1px solid; border-color: #808080 #fff #fff #808080; }
.addressbar .plain + .plain { margin-left: 2px; }
.addressbar .history { width: 10px; margin-left: 1px; }
.history svg { width: 10px; height: 8px; }
.path { display: flex; align-items: center; flex: 1; height: 21px; margin-left: 4px; border: 1px solid; border-color: #808080 #fff #fff #808080; }
.path .s16 { margin-right: 8px; }
.path span { margin: 0 5px; }
.tri { display: inline-block; border: 4px solid transparent; border-top-color: #000; border-bottom: 0; }
.tri.small { border-width: 3px; border-bottom: 0; }
.tri.drop { margin: 0 10px 0 auto; }
.refresh, .refresh svg { width: 21px; height: 20px; }
.search { width: 223px; height: 21px; margin-left: 5px; padding: 0 6px; font: inherit; background: #fff; border: 1px solid; border-color: #404040 #d4d0c8 #d4d0c8 #404040; border-left-width: 2px; border-radius: 0; }
.search::placeholder { color: #000; opacity: 1; }
.find, .find svg { width: 20px; height: 20px; }

.toolbar { display: flex; align-items: center; flex: none; height: 32px; padding: 0 14px 0 12px; gap: 16px; }
.toolbar .tri { margin-left: 8px; }
.toolbar .s16 { margin-right: 3px; }
.tools { display: flex; gap: 12px; margin-left: auto; }
.toolbar .tools .s16 { margin-right: 0; }
.tools .tri { margin: 0 3px 0 12px; }

.content { display: flex; flex: 1; min-height: 0; gap: 3px; }
.navpane { width: 157px; padding-top: 9px; background: #fff; white-space: nowrap; }
.navpane ul { margin-bottom: 19px; }
.navpane li { display: flex; align-items: center; height: 19px; padding-top: 1px; gap: 4px; }
.nav-head { padding-left: 20px; }
.nav-child { padding-left: 30px; }
.nav-head.active { background: #d4d0c8; }
.listing { flex: 1; min-width: 0; background: #fff; }
table { width: 100%; table-layout: fixed; border-collapse: separate; border-spacing: 0; }
.c-name { width: 271px; }
.c-mid { width: 120px; }
.c-size { width: 80px; }
th { height: 22px; padding: 2px 4px 0; text-align: left; font-weight: normal; background: #d4d0c8; border: 1px solid; border-color: #fff #404040 #404040 #fff; box-shadow: inset -1px -1px #808080; }
th.first { padding-left: 14px; }
.sort { display: inline-block; margin: 0 0 5px 2px; border: 3px solid transparent; border-top: 0; border-bottom-color: #808080; }
thead::after { content: ""; display: block; height: 7px; }
td { padding: 0; }
.cell { display: flex; align-items: center; height: 22px; padding-left: 5px; white-space: nowrap; overflow: hidden; }
.cell.name { margin-left: 14px; padding-left: 4px; gap: 2px; }
.cell.size { justify-content: flex-end; margin-right: 3px; padding-right: 3px; }
.selected .cell { background: #d4d0c8; color: #fff; }
.selected .cell.name { color: #000; }
.ps { flex: none; width: 14px; height: 14px; margin: 0 1px; background: #1a2b64; color: #e4ecfa; font: 9px/14px "Liberation Sans", sans-serif; text-align: center; }

.details { display: flex; flex: none; height: 53px; padding: 3px 19px; background: #fff; border-top: 5px solid #d4d0c8; white-space: nowrap; line-height: 18px; }
.thumb { width: 42px; height: 36px; }
.d-main { display: flex; flex-direction: column; margin-left: 15px; width: 53px; }
.d-main strong { font-size: 13px; font-weight: normal; }
.d-mid { display: grid; grid-template-columns: 73px auto; align-content: start; column-gap: 4px; }
.d-mid dt { text-align: right; }
.d-end { display: flex; gap: 5px; margin-left: 35px; }

.brand { position: absolute; right: 49px; bottom: 20px; display: flex; align-items: center; gap: 4px; color: #fff; opacity: .5; font: 300 38px/62px "Liberation Sans Narrow", "Roboto Condensed", "Open Sans Condensed", sans-serif; }
.brand svg { width: 56px; height: 62px; }
.build { position: absolute; right: 5px; bottom: -2px; display: flex; flex-direction: column; align-items: flex-end; color: #fff; line-height: 14px; }
.build span { line-height: 18px; }

.taskbar { display: flex; align-items: center; flex: none; height: 28px; padding: 1px 2px 0; background: #d4d0c8; border-top: 1px solid #d4d0c8; box-shadow: inset 0 1px #fff; }
.start, .task.raised { border: 1px solid; border-color: #fff #404040 #404040 #fff; box-shadow: inset -1px -1px #808080; }
.start { display: flex; align-items: center; width: 52px; height: 22px; margin-right: 9px; background: none; font-weight: bold; }
.task { display: grid; place-items: center; width: 32px; height: 22px; margin-right: 2px; background: none; border: 1px solid transparent; }
.task.stacked { box-shadow: inset -1px -1px #808080, inset -3px 0 #d4d0c8, inset -4px 0 #404040; }
.tray { display: flex; align-items: center; height: 22px; margin-left: auto; padding: 0 1px 0 5px; gap: 6px; border: 1px solid; border-color: #808080 #fff #fff #808080; }
.tray time { margin: 0 5px 0 7px; }
</style>
